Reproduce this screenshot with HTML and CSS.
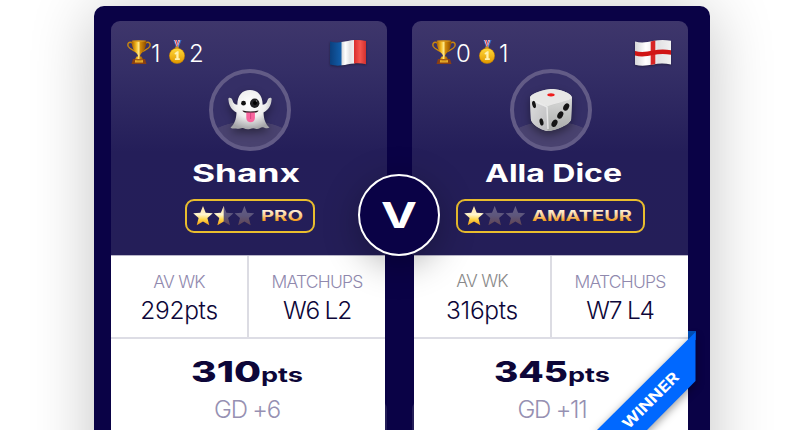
FILE: index.html
```html
<!DOCTYPE html>
<html lang="en">
<head>
<meta charset="utf-8">
<title>Matchup</title>
<link rel="stylesheet" href="styles.css">
</head>
<body>
<svg class="defs" width="0" height="0" aria-hidden="true">
  <defs>
    <linearGradient id="gold" x1="0" x2="1" y1="0" y2="0"><stop offset="0" stop-color="#a85f00"/><stop offset=".3" stop-color="#f2b81f"/><stop offset=".48" stop-color="#ffe98a"/><stop offset=".6" stop-color="#d28a08"/><stop offset="1" stop-color="#8a4a00"/></linearGradient>
    <linearGradient id="coin" x1="0" x2="0" y1="0" y2="1"><stop offset="0" stop-color="#ffd83a"/><stop offset="1" stop-color="#e39a00"/></linearGradient>
    <linearGradient id="star" x1="0" x2="0" y1="0" y2="1"><stop offset="0" stop-color="#ffe0a0"/><stop offset=".45" stop-color="#fff6cf"/><stop offset=".7" stop-color="#ffd84a"/><stop offset="1" stop-color="#f39a12"/></linearGradient>
    <linearGradient id="dim" x1="0" x2="0" y1="0" y2="1"><stop offset="0" stop-color="#655f86"/><stop offset=".5" stop-color="#5d567c"/><stop offset="1" stop-color="#624551"/></linearGradient>
    <linearGradient id="tier" gradientUnits="userSpaceOnUse" x1="0" x2="0" y1="2" y2="13"><stop offset="0" stop-color="#fff3e0"/><stop offset=".5" stop-color="#fbcf8d"/><stop offset="1" stop-color="#f49a16"/></linearGradient>
    <linearGradient id="fr-blue" x1="0" x2="1" y1="0" y2="0"><stop offset="0" stop-color="#0b3f7d"/><stop offset="1" stop-color="#1260ad"/></linearGradient>
    <linearGradient id="fr-red" x1="0" x2="1" y1="0" y2="0"><stop offset="0" stop-color="#d92d2c"/><stop offset=".5" stop-color="#f4554e"/><stop offset="1" stop-color="#d3302e"/></linearGradient>
    <linearGradient id="cloth" x1="0" x2="1" y1="0" y2="0"><stop offset="0" stop-color="#d5d5d8"/><stop offset=".3" stop-color="#ffffff"/><stop offset=".65" stop-color="#e2e2e4"/><stop offset="1" stop-color="#f1f1f1"/></linearGradient>
    <radialGradient id="ghost" cx=".5" cy=".35" r=".65"><stop offset="0" stop-color="#ffffff"/><stop offset=".55" stop-color="#eeeeee"/><stop offset="1" stop-color="#a5a5a8"/></radialGradient>
    <linearGradient id="dice-l" x1="0" x2="1" y1="0" y2="1"><stop offset="0" stop-color="#dededf"/><stop offset="1" stop-color="#bcbcbe"/></linearGradient>
    <linearGradient id="dice-r" x1="0" x2="0" y1="0" y2="1"><stop offset="0" stop-color="#d9dad9"/><stop offset="1" stop-color="#a9aba9"/></linearGradient>
    <symbol id="i-trophy" viewBox="0 0 24 24">
      <path d="M5.500 3C1.500 1 .2 4 1.300 6.500 2.500 9 5.500 9.500 8.500 11.500M18.500 3c4-2 5.300 1 4.200 3.500-1.200 2.500-4.200 3-7.200 5" fill="none" stroke="#c9870f" stroke-width="1.400"/>
      <path d="M4.700.7h14.600c.1 6-2 10.600-5.300 13l-.9 1.800v1.700h-2.200v-1.700l-.9-1.800C6.700 11.300 4.600 6.700 4.700.7Z" fill="url(#gold)"/>
      <ellipse cx="12" cy="1" rx="7.300" ry=".8" fill="#d8961a"/>
      <path d="M9.600 16.500h4.800l2 3H7.600Z" fill="url(#gold)"/>
      <path d="M6 19h12l1.500 5h-15Z" fill="#8a3f12"/><path d="M8.300 19.800h7.400l.4 2.600H7.900Z" fill="#f0b52c"/><path d="M9.300 20.800h5.400" stroke="#935107" stroke-width=".6"/>
    </symbol>
    <symbol id="i-medal" viewBox="0 0 16 24">
      <path d="M8.600 0h4L9.900 7H7Z" fill="#3567be"/><path d="M9.200 0h1.900L9 6.500H7.600Z" fill="#f4f4fa"/><path d="M9.800 0h.8L8.700 6h-.8Z" fill="#dc3c43"/>
      <path d="M4.300 0H8l2 7H7Z" fill="#3567be"/><path d="M5.300 0h2.400l1.700 6.500H7.700Z" fill="#f4f4fa"/><path d="M6.100 0h1.200L9 6.500H8Z" fill="#e0353d"/>
      <path d="M6.300 6.600h3.400v2H6.300Z" fill="#d29c14"/>
      <circle cx="8" cy="15.900" r="7.900" fill="#d18a00"/><circle cx="8" cy="15.700" r="7.200" fill="url(#coin)"/>
      <path d="m5.500 13.200 2.600-1.900h1.500v7h1.200v1.800H5.900v-1.800h1.400v-4.300l-1.300.8Z" fill="#fff2ae"/>
    </symbol>
    <symbol id="i-star" viewBox="0 0 20 19.500"><path d="m10 0 2.700 6.700 7.100.5-5.400 4.700 1.900 7.300L10 15.400l-6.300 3.800 1.900-7.300L.2 7.200l7.100-.5Z"/></symbol>
  </defs>
</svg>

<main class="stage">
  <section class="board">
    <article class="card card-left">
      <header class="hero">
        <div class="top">
          <div class="awards">
            <svg class="trophy"><use href="#i-trophy"/></svg><span class="wins one">1</span>
            <svg class="medal"><use href="#i-medal"/></svg><span>2</span>
          </div>
          <svg class="flag" viewBox="0 0 38 28">
            <path d="M1 2.600c4 1 8 1 12 .5v23.200c-4 .6-8 .4-12-.8Z" fill="url(#fr-blue)"/>
            <path d="M12.500 3.100C17 2.500 21 1.400 25.500 1.100v23.300c-4.500.2-8.500 1.300-13 1.900Z" fill="url(#cloth)"/>
            <path d="M25 1.100c4-.3 8-.2 12 .9v23.200c-4-1.100-8-1.100-12-.8Z" fill="url(#fr-red)"/>
          </svg>
        </div>
        <div class="avatar">
          <svg class="ghost" viewBox="0 0 46 42">
            <path d="M1.500 11c-1-3 3-3.200 4 .2.900 2.700 1.600 3.800 4.800 4.500C10.500 6 15.500 1 23 1s12.500 5 12.700 14.700c3.200-.7 3.900-1.800 4.800-4.500 1-3.400 5-3.200 4-.2-.3 5.800-3.300 10-8 12.500.3 7 2 11.500 6 15-2.500 1.500-4.500.3-6.500-.3-2.500-.5-4 2.300-6.700 1.700-2.600-.8-3.900-.7-6.300 0-2.500.8-4.500.2-6.300-.7-2.500-1-4.200 1-6.700.5-2.200-.6-4.500.7-6.500-1.200 4-3.500 5.700-8 6-15-4.700-2.500-7.700-6.700-8-12.500Z" fill="url(#ghost)"/>
            <circle cx="16.500" cy="14.200" r="2.400" fill="#111"/><circle cx="27.700" cy="14.200" r="4.700" fill="#202024"/><circle cx="28" cy="14" r="2" fill="#000"/><circle cx="29.500" cy="12" r=".7" fill="#888"/>
            <path d="M15.500 21.500c5 1.200 11 1.200 16 0-.6 2-4 2.700-8 2.700s-7.400-.7-8-2.700Z" fill="#251318"/>
            <path d="M19.300 23.600h8.600V29c0 5.600-8.600 5.600-8.600 0Z" fill="#f8649d"/><path d="M23.600 24v6" stroke="#d64580" stroke-width="1"/>
          </svg>
        </div>
        <svg class="name" width="108" height="26"><text x="0" y="21" textLength="108" lengthAdjust="spacingAndGlyphs">Shanx</text></svg>
        <div class="tier">
          <svg class="stars" viewBox="0 0 62 20">
            <use href="#i-star" width="20" height="19.500" fill="url(#star)"/>
            <use href="#i-star" x="20.700" width="20" height="19.500" fill="url(#dim)"/>
            <svg x="20.700" width="10" height="20"><use href="#i-star" width="20" height="19.500" fill="url(#star)"/></svg>
            <use href="#i-star" x="41.400" width="20" height="19.500" fill="url(#dim)"/>
          </svg>
          <svg class="level" width="42" height="16"><text x="0" y="13" textLength="42" lengthAdjust="spacingAndGlyphs">PRO</text></svg>
        </div>
      </header>
      <div class="sheet">
        <div class="stats">
          <div class="stat"><span class="label">AV WK</span><span class="value">292pts</span></div>
          <div class="stat"><span class="label">MATCHUPS</span><span class="value rec">W6 L2</span></div>
        </div>
        <div class="score">
          <svg class="total" width="112" height="34"><text class="num" x="0" y="25" textLength="70" lengthAdjust="spacingAndGlyphs">310</text><text class="unit" x="70" y="25" textLength="42" lengthAdjust="spacingAndGlyphs">pts</text></svg>
          <span class="gd">GD +6</span>
        </div>
      </div>
    </article>

    <article class="card card-right">
      <header class="hero">
        <div class="top">
          <div class="awards">
            <svg class="trophy"><use href="#i-trophy"/></svg><span class="wins">0</span>
            <svg class="medal"><use href="#i-medal"/></svg><span>1</span>
          </div>
          <svg class="flag" viewBox="0 0 38 28">
            <path d="M1 2.500c6 1.600 12 .8 18-.5 6-1.300 12-1.400 18-.2v23.700c-6-1.200-12-1.200-18 0-6 1.200-12 1.800-18 .3Z" fill="url(#cloth)"/>
            <path d="M16.700 2.500 21.300 1.500v23.600l-4.600.9Z" fill="#d82424"/>
            <path d="M1 12c6 1.600 12 .8 18-.5 6-1.200 12-1.400 18-.2v4.500c-6-1.200-12-1-18 .2-6 1.300-12 2.100-18 .5Z" fill="#d01414"/>
          </svg>
        </div>
        <div class="avatar">
          <svg class="dice" viewBox="0 0 44 44">
            <path d="M1 10C1 5 17 1 23 1c7 0 20 4 20 9l-1 21c0 5-17 12-23 12S2 36 2 31Z" fill="#c9cac9"/>
            <path d="M1 9.500C1 12 12 16 18.500 19v24C11 41.500 2 35.500 1.800 31Z" fill="url(#dice-l)"/>
            <path d="M43 9.500c0 3-14 5.500-24.500 9.500v24c7 .3 23.500-6.500 23.700-12Z" fill="url(#dice-r)"/>
            <path d="M1 9.500C2 5.500 16 1 23 1s19.500 4 20 8.500c-.5 3.500-19 6-24 8.700C12 16 1.500 12.500 1 9.500Z" fill="#e7e7e6"/>
            <path d="M2 11c5 4 12 5.500 16 8l1 22" fill="none" stroke="#f1f1f1" stroke-width="1.500" opacity=".8"/>
            <ellipse cx="22" cy="6.800" rx="3.700" ry="1.600" fill="#ee1c1c"/>
            <g fill="#151515"><ellipse cx="5" cy="16.500" rx="1.800" ry="3.700" transform="rotate(-12 5 16.500)"/><ellipse cx="12.500" cy="34" rx="1.900" ry="3.700" transform="rotate(-12 12.500 34)"/><ellipse cx="37.200" cy="19" rx="2.700" ry="3.900" transform="rotate(28 37.200 19)"/><ellipse cx="31.300" cy="27" rx="2.700" ry="3.900" transform="rotate(28 31.300 27)"/><ellipse cx="25.500" cy="35.200" rx="2.700" ry="3.900" transform="rotate(28 25.500 35.200)"/></g>
          </svg>
        </div>
        <svg class="name" width="137" height="26"><text x="0" y="21" textLength="137" lengthAdjust="spacingAndGlyphs">Alla Dice</text></svg>
        <div class="tier">
          <svg class="stars" viewBox="0 0 62 20">
            <use href="#i-star" width="20" height="19.500" fill="url(#star)"/>
            <use href="#i-star" x="20.700" width="20" height="19.500" fill="url(#dim)"/>
            <use href="#i-star" x="41.400" width="20" height="19.500" fill="url(#dim)"/>
          </svg>
          <svg class="level" width="100" height="16"><text x="0" y="13" textLength="100" lengthAdjust="spacingAndGlyphs">AMATEUR</text></svg>
        </div>
      </header>
      <div class="sheet">
        <div class="stats">
          <div class="stat"><span class="label grey">AV WK</span><span class="value">316pts</span></div>
          <div class="stat"><span class="label">MATCHUPS</span><span class="value rec">W7 L4</span></div>
        </div>
        <div class="score">
          <svg class="total" width="116" height="34"><text class="num" x="0" y="25" textLength="74" lengthAdjust="spacingAndGlyphs">345</text><text class="unit" x="74" y="25" textLength="42" lengthAdjust="spacingAndGlyphs">pts</text></svg>
          <span class="gd">GD +11</span>
        </div>
      </div>
      <svg class="ribbon" width="110" height="110">
        <path d="M91 0h8v9h-8Z" fill="#0050b8"/>
        <path class="band" d="M98.500 1v49L48 101H-2Z"/>
        <text x="-36" y="5.500" transform="translate(53 69.500) rotate(-45)" textLength="73" lengthAdjust="spacingAndGlyphs">WINNER</text>
      </svg>
    </article>

    <div class="versus"><svg width="44" height="44"><text x="4" y="35" textLength="36" lengthAdjust="spacingAndGlyphs">V</text></svg></div>
  </section>
</main>
</body>
</html>
```

FILE: styles.css
```css
* { box-sizing: border-box; }

body {
  margin: 0;
  background: #fff;
  font-family: Inter, "Liberation Sans", sans-serif;
}

svg { display: block; }
.defs { position: absolute; }

.stage {
  height: 430px;
  padding: 6px 98px 0 94px;
  overflow: hidden;
}

.board {
  position: relative;
  display: grid;
  grid-template-columns: 276px 276px;
  column-gap: 25px;
  height: 520px;
  padding: 15px 22px 0 17px;
  border-radius: 10px;
  background: #0a0246;
  box-shadow: 0 6px 64px rgba(0, 0, 0, .24);
}

.card { position: relative; }

.card::before {
  content: "";
  position: absolute;
  top: 380px;
  left: 0;
  width: 276px;
  height: 60px;
  border-radius: 8px;
  background: #241e58;
}

.hero {
  display: flex;
  flex-direction: column;
  align-items: center;
  height: 234px;
  border-radius: 9px 9px 0 0;
  background: linear-gradient(#3e366b, #342e66 22%, #241e59 56%, #241e58);
}

.top {
  display: flex;
  justify-content: space-between;
  width: 100%;
  height: 48px;
  padding: 18px 20px 0 16px;
}

.card-right .top { padding-left: 20px; padding-right: 16px; }

.awards {
  display: flex;
  height: 26px;
  color: #fff;
  font-size: 24px;
  font-weight: 300;
  line-height: 30px;
}

.trophy { width: 24px; height: 24px; margin-top: 1px; }
.medal { width: 16px; height: 24px; margin: 1px 4px 0 0; }
.wins { width: 23px; }
.one { width: 18px; }

.flag { width: 38px; height: 28px; filter: drop-shadow(0 1px 1px rgba(0, 0, 0, .35)); }

.avatar {
  display: flex;
  justify-content: center;
  width: 82px;
  height: 82px;
  margin-left: 1px;
  border: 4px solid #625b86;
  border-radius: 50%;
  background: radial-gradient(ellipse 50px 28px at 50% 76px, #49426f 98%, #352f66 100%);
}

.ghost { width: 46px; height: 42px; margin-top: 16px; filter: drop-shadow(0 4px 4px rgba(0, 0, 0, .4)); }
.dice { width: 44px; height: 44px; margin-top: 15px; filter: drop-shadow(0 4px 4px rgba(0, 0, 0, .4)); }

.name {
  margin: 10px 0 0 -6px;
  overflow: visible;
  fill: #fff;
  font-size: 24.500px;
  font-weight: 650;
}

.card-right .name { margin-left: 7px; }

.tier {
  display: flex;
  align-items: center;
  gap: 6px;
  height: 34px;
  margin: 12px 0 0 1px;
  padding: 0 10px 0 6px;
  border: 2px solid #e9bd2e;
  border-radius: 9px;
}

.card-right .tier { margin-left: 0; padding-right: 11px; }

.stars { width: 62px; height: 20px; }
.level { overflow: visible; fill: url(#tier); font-size: 15px; font-weight: 700; }

.sheet { width: 274px; height: 270px; background: #fff; border-top: 1px solid #b9b6c9; position: relative; }
.card-right .sheet { margin-left: 2px; }

.stats {
  display: grid;
  grid-template-columns: 136px 138px;
  height: 83px;
  border-bottom: 2px solid #dddde5;
}

.stat { display: flex; flex-direction: column; align-items: center; padding-top: 15px; }
.stat + .stat { border-left: 2px solid #dcdce3; }

.label {
  color: #9089ae;
  font-size: 17.500px;
  font-weight: 300;
  line-height: 22px;
  letter-spacing: -.8px;
}

.grey { color: #898989; position: relative; top: -1.500px; }

.value {
  color: #0d0638;
  font-size: 24.500px;
  font-weight: 350;
  line-height: 30px;
  letter-spacing: -.3px;
  margin-top: 2px;
}

.rec { letter-spacing: -1.200px; }

.score { display: flex; flex-direction: column; align-items: center; padding: 18px 2px 0 0; }
.card-right .score { padding: 18px 0 0 2px; }

.total { overflow: visible; fill: #0d0638; }
.num { font-size: 28px; font-weight: 800; }
.unit { font-size: 20px; font-weight: 700; }

.gd {
  color: #9690b2;
  font-size: 24px;
  font-weight: 300;
  line-height: 30px;
  letter-spacing: -1.200px;
  margin-top: 4px;
}

.card-right .gd { letter-spacing: -1.200px; }

.ribbon { position: absolute; left: 185px; top: 310px; overflow: visible; }
.band { fill: #0068ff; filter: drop-shadow(0 3px 4px rgba(0, 0, 0, .4)); }
.ribbon text { fill: #fff; font-size: 15px; font-weight: 700; }

.versus {
  position: absolute;
  left: 264px;
  top: 168px;
  display: flex;
  align-items: center;
  justify-content: center;
  width: 82px;
  height: 82px;
  border: 2px solid #fff;
  border-radius: 50%;
  background: #0a0246;
  box-shadow: 0 8px 36px rgba(0, 0, 0, .3);
}

.versus text { fill: #fff; font-size: 35px; font-weight: 700; }
```
